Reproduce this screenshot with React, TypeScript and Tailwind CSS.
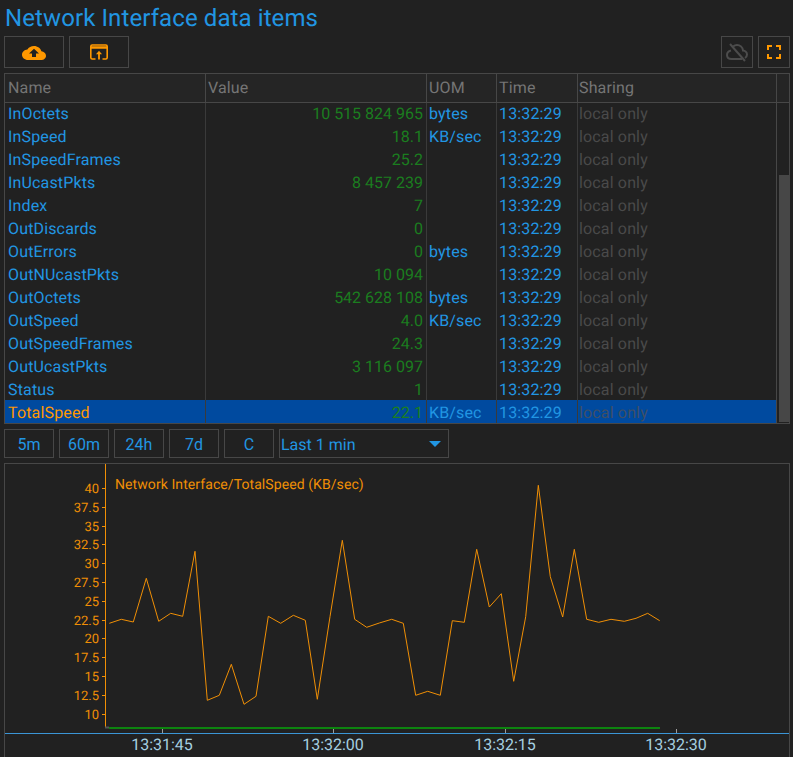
const rows = [
  ["InOctets", "10 515 824 965", "bytes"],
  ["InSpeed", "18.1", "KB/sec"],
  ["InSpeedFrames", "25.2", ""],
  ["InUcastPkts", "8 457 239", ""],
  ["Index", "7", ""],
  ["OutDiscards", "0", ""],
  ["OutErrors", "0", "bytes"],
  ["OutNUcastPkts", "10 094", ""],
  ["OutOctets", "542 628 108", "bytes"],
  ["OutSpeed", "4.0", "KB/sec"],
  ["OutSpeedFrames", "24.3", ""],
  ["OutUcastPkts", "3 116 097", ""],
  ["Status", "1", ""],
  ["TotalSpeed", "22.1", "KB/sec"],
];

const yTicks = [
  ["40", 488],
  ["37.5", 507],
  ["35", 526],
  ["32.5", 544],
  ["30", 563],
  ["27.5", 582],
  ["25", 601],
  ["22.5", 620],
  ["20", 638],
  ["17.5", 657],
  ["15", 676],
  ["12.5", 695],
  ["10", 714],
] as const;

const xTicks = [
  ["13:31:45", 162],
  ["13:32:00", 333],
  ["13:32:15", 505],
  ["13:32:30", 676],
] as const;

const line =
  "109.3,623.3 121.3,619.3 133.3,622 146.3,578.3 158.7,621.3 170.7,613.3 182.7,616.3 195,551.3 207.3,700.3 219.3,695.3 231.3,664.3 244,704.3 256,696.3 268.3,616.3 280.7,623.3 293.3,615.3 305.3,620.3 317.3,699.3 330,616.7 342.3,540.3 354.7,619.3 366.7,627.3 379.3,623 391.7,619.3 403.3,623.3 415.7,695.3 427.7,691.3 440.3,695.3 452.3,620.7 464.3,622.3 476.7,549.3 489.3,607 501.3,593.7 513.7,681.3 525.7,616.7 538.3,485.3 550.3,576.7 562.7,617 574.3,549.3 586.7,619.3 598.7,622.3 611,619.3 624.3,621.3 636,618.3 647.7,613.3 659.7,620.7";

function IconButton({ className, children }: { className: string; children: React.ReactNode }) {
  return (
    <button className={`flex h-8 items-center justify-center border border-[#474747] ${className}`}>
      {children}
    </button>
  );
}

function RangeButton({ label }: { label: string }) {
  return (
    <button className="flex h-[29px] w-[50px] items-center justify-center border border-[#474747] pt-[2px] text-[#2196e3]">
      {label}
    </button>
  );
}

function Cell({ className, children }: { className: string; children?: React.ReactNode }) {
  return <div className={`flex h-full shrink-0 items-center px-1 ${className}`}>{children}</div>;
}

export default function App() {
  return (
    <div className="h-[757px] w-[793px] overflow-hidden bg-[#212121] font-['Roboto',sans-serif] text-base text-[#2196e3] [text-rendering:geometricPrecision]">
      <h1 className="h-9 pl-[5px] pt-[2px] text-2xl leading-8 tracking-[0.1px] text-[#2196e3]">
        Network Interface data items
      </h1>

      <div className="flex items-center justify-between pl-1 pr-[3px]">
        <div className="flex gap-[5px]">
          <IconButton className="w-[60px] pt-[2px]">
            <svg width="24" height="14" viewBox="0 0 24 16" preserveAspectRatio="none">
              <path
                fill="#ff9800"
                d="M19.4 6C18.7 2.6 15.6 0 12 0 9.1 0 6.6 1.6 5.4 4 2.3 4.4 0 7 0 10c0 3.300 2.700 6 6 6h13c2.800 0 5-2.200 5-5 0-2.600-2.100-4.800-4.600-5z"
              />
              <path fill="#212121" d="M12 3.200 17 8.500H14V12.500H10V8.500H7z" />
            </svg>
          </IconButton>
          <IconButton className="w-[60px]">
            <svg width="18" height="16" viewBox="0 0 18 16" fill="none" stroke="#ff9800" strokeWidth="1.600">
              <path d="M5.500 15H2.200Q.8 15 .8 13.600V2.400Q.8 1 2.200 1H15.800Q17.200 1 17.200 2.400V13.600Q17.200 15 15.800 15H12.500" />
              <path d="M1 3.500H17" strokeWidth="2.500" />
              <path d="M9 15.500V8.500" strokeWidth="1.800" />
              <path d="M9 6.800 12 10.300H6z" fill="#ff9800" stroke="none" />
            </svg>
          </IconButton>
        </div>
        <div className="flex gap-[5px]">
          <IconButton className="w-8">
            <svg width="24" height="24" viewBox="0 0 24 24" fill="none" stroke="#4c4c4c" strokeWidth="2">
              <path d="M6 10.500C3.800 11 2 12.900 2 15c0 2.500 2 4 4.500 4h10.500M8 6.500c1.200-.9 2.600-1.500 4-1.500 3 0 5.600 2.200 6 5.500 2 .2 4 1.800 4 4 0 1.500-.8 2.800-2 3.500" />
              <path d="M5 4 20 21" />
            </svg>
          </IconButton>
          <IconButton className="w-8">
            <svg width="14" height="14" viewBox="0 0 14 14" fill="none" stroke="#ff9800" strokeWidth="2">
              <path d="M1 5V1H5M9 1H13V5M13 9V13H9M5 13H1V9" />
            </svg>
          </IconButton>
        </div>
      </div>

      <div className="ml-1 mr-[3px] mt-[5px] flex h-[351px] border border-[#474747] tracking-[0.15px]">
        <div className="flex w-[771px] shrink-0 flex-col">
          <div className="relative z-10 flex h-[29px] shrink-0 border-b border-[#474747] bg-[#252525] text-[#757575]">
            <Cell className="w-[201px] border-r border-[#474747] pl-[3px]">Name</Cell>
            <Cell className="w-[221px] border-r border-[#474747] pl-[2px]">Value</Cell>
            <Cell className="w-[70px] border-r border-[#474747] pl-[2px]">UOM</Cell>
            <Cell className="w-[81px] border-r border-[#474747] pl-[2px]">Time</Cell>
            <Cell className="w-[198px] pl-[1px]">Sharing</Cell>
          </div>
          <div className="-mt-[2px]">
            {rows.map(([name, value, uom], i) => {
              const selected = i === rows.length - 1;
              return (
                <div key={name} className={`flex h-[23px] ${selected ? "bg-[#004a9f]" : ""}`}>
                  <Cell className={`w-[201px] border-r border-[#3a3a3a] pl-[3px] pt-[2px] ${selected ? "text-[#ff9800]" : ""}`}>
                    {name}
                  </Cell>
                  <Cell className="w-[221px] justify-end border-r border-[#3a3a3a] pr-[3px] pt-[2px] tracking-normal text-[#1b7d1f]">
                    {value}
                  </Cell>
                  <Cell className="w-[70px] border-r border-[#3a3a3a] pl-[2px] pt-[2px]">{uom}</Cell>
                  <Cell className="w-[81px] border-r border-[#3a3a3a] pl-[2px] pt-[2px]">13:32:29</Cell>
                  <Cell className={`w-[198px] pl-[1px] pt-[2px] ${selected ? "text-[#3f4f66]" : "text-[#4a4a4a]"}`}>local only</Cell>
                </div>
              );
            })}
          </div>
        </div>
        <div className="flex flex-1 flex-col border-l border-[#474747]">
          <div className="h-[29px] shrink-0 border-b border-[#474747] bg-[#252525]" />
          <div className="h-[72px] shrink-0" />
          <div className="mb-[1px] ml-[2px] flex-1 bg-[#474747]" />
        </div>
      </div>

      <div className="ml-1 mt-[5px] flex gap-[5px]">
        <RangeButton label="5m" />
        <RangeButton label="60m" />
        <RangeButton label="24h" />
        <RangeButton label="7d" />
        <RangeButton label="C" />
        <div className="flex h-[29px] w-[170px] items-center justify-between border border-[#474747] pl-[1px] pr-[7px]">
          <span className="pt-[2px]">Last 1 min</span>
          <span className="mt-[1px] h-0 w-0 border-x-[6px] border-t-[6px] border-x-transparent border-t-[#2196e3]" />
        </div>
      </div>

      <div className="ml-1 mr-[3px] mt-[5px] h-[300px] border border-[#474747]">
        <svg width="784" height="298" viewBox="5 464 784 298" className="block">
          <path d="M105.500 464V727" stroke="#f08f05" fill="none" />
          {yTicks.map(([label, y]) => (
            <g key={label}>
              <path d={`M102 ${y + 0.5}H105`} stroke="#f08f05" fill="none" />
              <text x="99" y={y + 5} textAnchor="end" fontSize="13" fill="#f08f05">
                {label}
              </text>
            </g>
          ))}
          <text x="115" y="489" fontSize="14" letterSpacing="0.08" fill="#f08f05">
            Network Interface/TotalSpeed (KB/sec)
          </text>
          <polyline points={line} fill="none" stroke="#f08f05" strokeWidth="1" />
          <path d="M105 727.500H109" stroke="#555555" strokeWidth="2" fill="none" />
          <path d="M109 728H660" stroke="#0d840f" strokeWidth="2" fill="none" />
          <path d="M5 733.500H789" stroke="#3b95d6" fill="none" />
          {xTicks.map(([label, x]) => (
            <g key={label}>
              <path d={`M${x + 0.5} 729V733`} stroke="#9e9e9e" fill="none" />
              <text x={x} y="749.500" textAnchor="middle" fontSize="16" fill="#a5cfe0">
                {label}
              </text>
            </g>
          ))}
        </svg>
      </div>
    </div>
  );
}
